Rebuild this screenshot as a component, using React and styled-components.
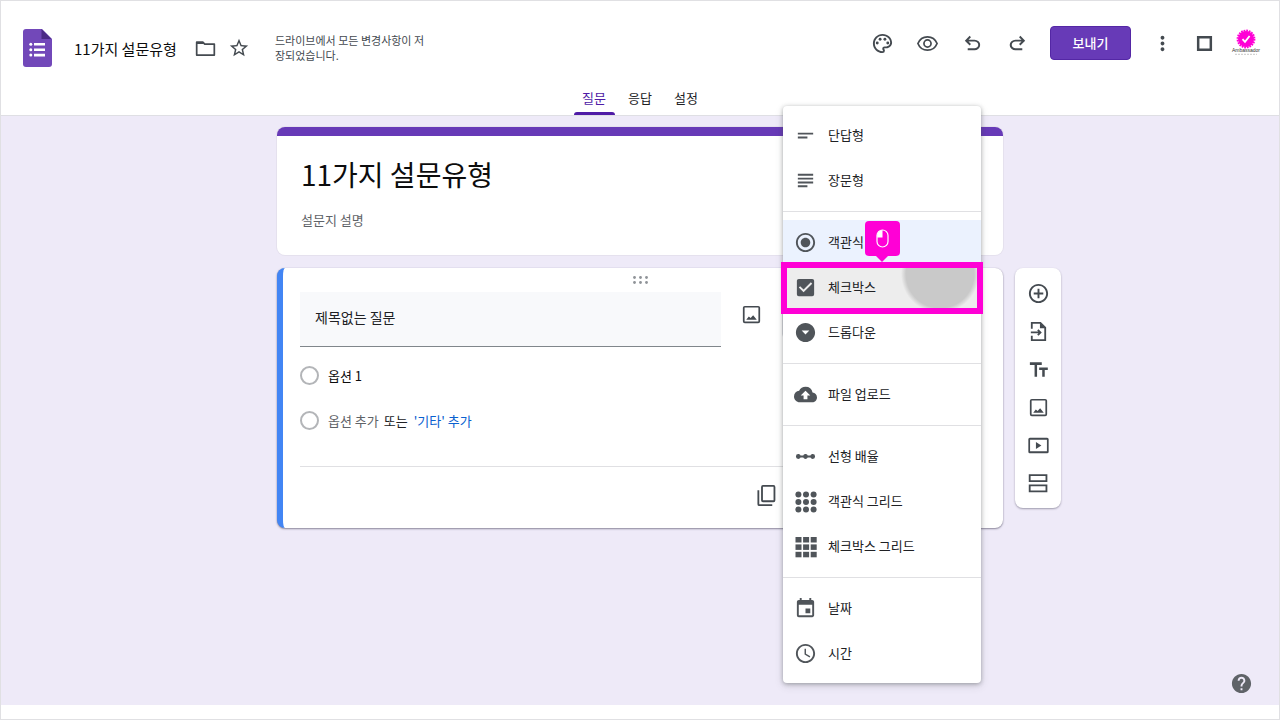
import React from "react";
import styled, { createGlobalStyle, css } from "styled-components";
import {
  MdAccessTime,
  MdAddCircleOutline,
  MdArrowDropDownCircle,
  MdCheckBox,
  MdCloudUpload,
  MdEvent,
  MdHelp,
  MdLinearScale,
  MdMoreVert,
  MdOutlinePalette,
  MdRadioButtonChecked,
  MdShortText,
  MdStarBorder,
  MdSubject,
} from "react-icons/md";

const color = {
  purple: "#673ab7",
  purpleDark: "#4f1ba6",
  canvas: "#eeeaf8",
  ink: "#202124",
  black: "#0c0c0d",
  icon: "#444a50",
  muted: "#5f6368",
  line: "#e0e0e3",
  blue: "#4285f4",
  link: "#0b61d0",
  pink: "#ff00d6",
};

const GlobalStyle = createGlobalStyle`
  *, *::before, *::after { box-sizing: border-box; }
  body {
    margin: 0;
    background: #fff;
    color: ${color.ink};
    font-family: "Noto Sans CJK KR", "Noto Sans", sans-serif;
    font-size: 13px;
    line-height: 20px;
  }
  button, input { font: inherit; color: inherit; }
  svg { display: block; flex: none; }
`;

/* ---------- shared controls ---------- */

const PlainButton = styled.button`
  border: 0;
  padding: 0;
  background: none;
  cursor: pointer;
`;

const IconButton = styled(PlainButton)`
  display: flex;
  align-items: center;
  justify-content: center;
  width: ${(p) => p.$w || 45}px;
  height: ${(p) => p.$h || 34}px;
  color: ${(p) => p.$color || color.icon};
`;

const PlainInput = styled.input`
  display: block;
  border: 0;
  padding: 0;
  background: none;
  outline: none;
  min-width: 0;
`;

/* ---------- frame and header ---------- */

const Frame = styled.div`
  display: flex;
  flex-direction: column;
  min-height: 100vh;
  border: 1px solid ${color.line};
  padding-bottom: 14px;
`;

const Header = styled.header`
  border-bottom: 1px solid #dfdfe4;
`;

const TopRow = styled.div`
  display: flex;
  justify-content: space-between;
  align-items: flex-start;
  height: 84px;
  padding: 25px 12px 0 22px;
`;

const DocInfo = styled.div`
  display: flex;
  align-items: center;
  height: 44px;
`;

const DocTitle = styled(PlainInput)`
  width: 110px;
  height: 24px;
  margin: 0 4px 0 22px;
  color: ${color.black};
  font-size: 15px;
`;

const SaveStatus = styled.p`
  width: 154px;
  margin: 0 0 0 19px;
  color: ${color.icon};
  font-size: 11px;
  line-height: 15px;
  word-break: break-all;
`;

const Actions = styled.div`
  display: flex;
  align-items: center;
`;

const SendButton = styled(PlainButton)`
  width: 81px;
  height: 34px;
  margin: 0 10px;
  border-radius: 4px;
  background: ${color.purple};
  border: 1px solid #5427a5;
  color: #fff;
  font-weight: 500;
`;

const Tabs = styled.nav`
  display: flex;
  justify-content: center;
  gap: 5px;
`;

const Tab = styled(PlainButton)`
  position: relative;
  width: 41px;
  height: 30px;
  padding-bottom: 5px;
  color: ${(p) => (p.$active ? color.purpleDark : color.ink)};

  ${(p) =>
    p.$active &&
    css`
      &::after {
        content: "";
        position: absolute;
        inset: auto 0 0;
        height: 3px;
        border-radius: 3px 3px 0 0;
        background: ${color.purpleDark};
      }
    `}
`;

/* ---------- form canvas ---------- */

const Canvas = styled.main`
  position: relative;
  flex: 1;
  display: grid;
  grid-template-columns: 1fr minmax(0, 726px) 1fr;
  grid-auto-rows: max-content;
  gap: 13px 0;
  padding: 11px 0 24px;
  background: ${color.canvas};
`;

const Card = styled.section`
  grid-column: 2;
  border-radius: 8px;
  background: #fff;
`;

const TitleCard = styled(Card)`
  border-top: 9px solid ${color.purple};
  padding: 18px 24px 24px;
  box-shadow: 0 0 0 1px #e5e1ee;
`;

const FormTitle = styled(PlainInput)`
  width: 100%;
  height: 40px;
  color: ${color.black};
  font-size: 28px;
  line-height: 40px;
`;

const FormDescription = styled(PlainInput)`
  width: 100%;
  height: 24px;
  margin-top: 13px;
  color: ${color.muted};
`;

const QuestionCard = styled(Card)`
  position: relative;
  border-left: 6px solid ${color.blue};
  padding: 0 22px 0 17px;
  box-shadow: 0 1px 2px rgba(60, 55, 80, 0.55), 0 0 1px rgba(60, 55, 80, 0.25);
`;

const DragHandle = styled(PlainButton)`
  display: flex;
  justify-content: center;
  width: 100%;
  height: 24px;
  padding-top: 8px;
  color: #8f9398;
`;

const QuestionRow = styled.div`
  display: flex;
  align-items: flex-start;
`;

const QuestionInput = styled(PlainInput)`
  flex: 1;
  height: 55px;
  padding: 0 15px 4px;
  border-bottom: 1px solid #80868b;
  background: #f8f9fb;
  font-size: 14px;
`;

const TypeField = styled(PlainButton)`
  width: 199px;
  height: 46px;
  border: 1px solid #dadce0;
  border-radius: 4px;
`;

const Options = styled.div`
  padding: 6px 0 23px;
`;

const OptionRow = styled.div`
  display: flex;
  align-items: center;
  height: 45px;
`;

const Radio = styled.input`
  appearance: none;
  flex: none;
  width: 19px;
  height: 19px;
  margin: 0 9px 0 0;
  border: 2px solid #b3b5b8;
  border-radius: 50%;
`;

const OptionInput = styled(PlainInput)`
  width: 200px;
  height: 20px;
  color: ${color.black};
`;

const AddOption = styled(PlainButton)`
  color: ${color.muted};
`;

const Or = styled.span`
  margin: 0 6px 0 5px;
`;

const AddOther = styled(PlainButton)`
  color: ${color.link};
`;

const QuestionFooter = styled.div`
  display: flex;
  justify-content: flex-end;
  align-items: center;
  height: 62px;
  padding: 0 192px 4px 0;
  border-top: 1px solid ${color.line};
`;

/* ---------- side toolbar ---------- */

const SideTools = styled.aside`
  grid-column: 3;
  justify-self: start;
  align-self: start;
  width: 46px;
  margin-left: 12px;
  padding: 6px 0;
  border-radius: 8px;
  background: #fff;
  box-shadow: 0 1px 2px rgba(60, 55, 80, 0.45);
`;

const HelpButton = styled(IconButton)`
  position: absolute;
  right: 21px;
  bottom: 5px;
`;

/* ---------- question type menu ---------- */

const Menu = styled.div`
  position: absolute;
  z-index: 2;
  top: -162px;
  right: 22px;
  width: 198px;
  padding: 7px 0;
  border-radius: 4px;
  background: #fff;
  box-shadow: 0 1px 4px rgba(60, 64, 67, 0.4), 0 3px 8px rgba(60, 64, 67, 0.15);
`;

const MenuDivider = styled.hr`
  margin: 8px 0;
  border: 0;
  border-top: 1px solid ${color.line};
`;

const MenuItem = styled(PlainButton)`
  position: relative;
  display: flex;
  align-items: center;
  width: 100%;
  height: 45px;
  background: ${(p) => (p.$state === "selected" ? "#ebf2fe" : "#fff")};
  text-align: left;
  ${(p) =>
    p.$state === "pressed" &&
    css`
      z-index: 1;
      background: radial-gradient(circle at 157px 9px, #c9c9c9 34px, #ededed 39px);
    `}
`;

const MenuIcon = styled.span`
  display: flex;
  justify-content: center;
  width: 45px;
  color: #50555a;
`;

const MenuLabel = styled.span`
  padding-bottom: 2px;
`;

const Spotlight = styled.span`
  position: absolute;
  inset: -3px -2px -4px;
  border: 6px solid ${color.pink};
`;

const ClickBadge = styled.span`
  position: absolute;
  left: 82px;
  top: -44px;
  display: flex;
  align-items: center;
  justify-content: center;
  width: 35px;
  height: 35px;
  border-radius: 4px;
  background: ${color.pink};

  &::after {
    content: "";
    position: absolute;
    top: 100%;
    left: 11px;
    border: 6px solid transparent;
    border-top-color: ${color.pink};
    border-bottom: 0;
  }
`;

/* ---------- drawings ---------- */

const Svg = ({ size = 23, children, ...rest }) => (
  <svg width={size} height={size} viewBox="0 0 24 24" fill="currentColor" aria-hidden="true" {...rest}>
    {children}
  </svg>
);

const SymbolSvg = ({ d, size = 23 }) => (
  <svg width={size} height={size} viewBox="0 -960 960 960" fill="currentColor" aria-hidden="true">
    <path d={d} />
  </svg>
);

const FormsLogo = () => (
  <svg width="29" height="38" viewBox="0 0 29 38" aria-hidden="true">
    <path d="M3 0h16l10 10v25a3 3 0 0 1-3 3H3a3 3 0 0 1-3-3V3a3 3 0 0 1 3-3z" fill="#7248b9" />
    <path d="M18.500 0L28.500 10H18.500z" fill="#4b2a86" />
    <g fill="#fff">
      <path d="M11 14h11v2.600H11zM11 19.400h11V22H11zM11 24.800h11v2.600H11z" />
      <circle cx="7.800" cy="15.300" r="1.500" />
      <circle cx="7.800" cy="20.700" r="1.500" />
      <circle cx="7.800" cy="26.100" r="1.500" />
    </g>
  </svg>
);

const FolderIcon = () => (
  <Svg fill="none" stroke="currentColor" strokeWidth="1.8" strokeLinejoin="round">
    <path d="M3 5.400h6.200l2 2H21.200v11.400H2.800V5.400z" />
    <path d="M3 6.400h7" />
  </Svg>
);

const EyeIcon = () => (
  <Svg fill="none" stroke="currentColor" strokeWidth="1.8">
    <path d="M12 5C7.600 5 3.700 7.800 2 12c1.700 4.200 5.600 7 10 7s8.300-2.800 10-7c-1.700-4.200-5.600-7-10-7z" />
    <circle cx="12" cy="12" r="3.700" />
  </Svg>
);

const UndoIcon = () => (
  <SymbolSvg d="M280-200v-80h284q63 0 109.500-40T720-420q0-60-46.500-100T564-560H312l104 104-56 56-200-200 200-200 56 56-104 104h252q97 0 169.500 63T800-420q0 94-72.500 157T564-200H280Z" />
);

const RedoIcon = () => (
  <SymbolSvg d="M396-200q-97 0-169.500-63T154-420q0-94 72.500-157T396-640h252L544-744l56-56 200 200-200 200-56-56 104-104H396q-63 0-109.500 40T240-420q0 60 46.500 100T396-280h284v80H396Z" />
);

const SquareIcon = () => (
  <Svg fill="none" stroke="currentColor" strokeWidth="2.600">
    <path d="M5.400 5.400h13.200v13.200H5.400z" />
  </Svg>
);

const AmbassadorAvatar = () => (
  <svg width="30" height="30" viewBox="0 0 30 30" aria-hidden="true">
    <circle cx="15" cy="11" r="8" fill={color.pink} />
    <circle cx="15" cy="11" r="8.400" fill="none" stroke={color.pink} strokeWidth="2" strokeDasharray="1.700 0.940" />
    <path d="M11.500 11.200l2.500 2.600 4.600-5.800" fill="none" stroke="#fff" strokeWidth="1.800" />
    <text x="15" y="24" textAnchor="middle" fontSize="5" fontFamily="Liberation Sans, sans-serif" fill="#333">
      Ambassador
    </text>
    <path d="M4 26.300h22" stroke="#c9c9c9" strokeWidth="1" strokeDasharray="2 1" />
  </svg>
);

const DragDots = () => (
  <svg width="15" height="8" viewBox="0 0 15 8" fill="currentColor" aria-hidden="true">
    {[1.5, 7.5, 13.5].map((x) =>
      [1.5, 6.5].map((y) => <circle key={`${x}-${y}`} cx={x} cy={y} r="1.400" />)
    )}
  </svg>
);

const ImageIcon = () => (
  <Svg>
    <path
      fillRule="evenodd"
      d="M5 3h14a2 2 0 0 1 2 2v14a2 2 0 0 1-2 2H5a2 2 0 0 1-2-2V5a2 2 0 0 1 2-2zm0 1.800a.2.200 0 0 0-.2.200v14c0 .1.100.2.200.2h14a.2.200 0 0 0 .2-.2V5a.2.200 0 0 0-.2-.2z"
    />
    <path d="M6.500 17.500l2.700-3.400 1.900 1.500 2.600-2.800 3.800 4.700z" />
  </Svg>
);

const ImportIcon = () => (
  <Svg fill="none" stroke="currentColor" strokeWidth="1.900">
    <path d="M5 9V3h9l5 5v13H5v-4.500M4 13h10M11.300 10.200l2.800 2.800-2.800 2.800" />
    <path d="M13.500 3v5.500H19z" fill="currentColor" stroke="none" />
  </Svg>
);

const TextIcon = () => (
  <Svg>
    <path d="M3 4.500v2.700h4.900v12.300h2.600V7.200h4.900V4.500zM21.700 10h-9v2.500h3.200v7h2.600v-7h3.200z" />
  </Svg>
);

const VideoIcon = () => (
  <Svg>
    <path
      fillRule="evenodd"
      d="M3 4h18a1.600 1.600 0 0 1 1.600 1.600v12.800A1.600 1.600 0 0 1 21 20H3a1.600 1.600 0 0 1-1.600-1.600V5.600A1.600 1.600 0 0 1 3 4zm.2 1.900v12.200h17.600V5.900z"
    />
    <path d="M9.300 8.300v7.400l5.700-3.700z" />
  </Svg>
);

const SectionIcon = () => (
  <Svg fill="none" stroke="currentColor" strokeWidth="1.900">
    <path d="M2.800 3.200h17.500v6.300H2.800zM2.800 14h17.500v6.300H2.800z" />
  </Svg>
);

const CopyIcon = () => (
  <Svg fill="none" stroke="currentColor" strokeWidth="1.900">
    <rect x="7.300" y="2" width="13" height="16" rx="1" />
    <path d="M3.500 6.500V21a1 1 0 0 0 1 1h13.500" />
  </Svg>
);

const cells = [0, 1, 2].flatMap((row) => [0, 1, 2].map((col) => [col, row]));

const DotGridIcon = () => (
  <svg width="22" height="22" viewBox="0 0 22 22" fill="currentColor" aria-hidden="true">
    {cells.map(([c, r]) => (
      <circle key={`${c}${r}`} cx={3.4 + c * 7.6} cy={3.4 + r * 7.6} r="3" />
    ))}
  </svg>
);

const SquareGridIcon = () => (
  <svg width="22" height="22" viewBox="0 0 22 22" fill="currentColor" aria-hidden="true">
    {cells.map(([c, r]) => (
      <rect key={`${c}${r}`} x={0.5 + c * 7.6} y={1 + r * 7.4} width="6" height="5.500" />
    ))}
  </svg>
);

const MouseIcon = () => (
  <svg width="13" height="19" viewBox="0 0 13 19" aria-hidden="true">
    <path d="M6.500 1A5.300 5.300 0 0 0 1.200 6.300V8.500h5.300z" fill="#fff" />
    <rect x="1" y="1" width="11" height="17" rx="5.500" fill="none" stroke="#fff" strokeWidth="1.200" />
  </svg>
);

/* ---------- data ---------- */

const questionTypes = [
  [
    { label: "단답형", icon: <MdShortText size={23} /> },
    { label: "장문형", icon: <MdSubject size={23} /> },
  ],
  [
    { label: "객관식", icon: <MdRadioButtonChecked size={23} />, state: "selected" },
    { label: "체크박스", icon: <MdCheckBox size={23} />, state: "pressed" },
    { label: "드롭다운", icon: <MdArrowDropDownCircle size={23} /> },
  ],
  [{ label: "파일 업로드", icon: <MdCloudUpload size={23} /> }],
  [
    { label: "선형 배율", icon: <MdLinearScale size={23} /> },
    { label: "객관식 그리드", icon: <DotGridIcon /> },
    { label: "체크박스 그리드", icon: <SquareGridIcon /> },
  ],
  [
    { label: "날짜", icon: <MdEvent size={23} /> },
    { label: "시간", icon: <MdAccessTime size={23} /> },
  ],
];

const sideTools = [
  { label: "질문 추가", icon: <MdAddCircleOutline size={23} /> },
  { label: "질문 가져오기", icon: <ImportIcon /> },
  { label: "제목 및 설명 추가", icon: <TextIcon /> },
  { label: "이미지 추가", icon: <ImageIcon /> },
  { label: "동영상 추가", icon: <VideoIcon /> },
  { label: "섹션 추가", icon: <SectionIcon /> },
];

const headerTools = [
  { label: "테마 맞춤설정", icon: <MdOutlinePalette size={23} /> },
  { label: "미리보기", icon: <EyeIcon /> },
  { label: "실행취소", icon: <UndoIcon /> },
  { label: "재실행", icon: <RedoIcon /> },
];

function TypeMenu() {
  return (
    <Menu role="menu" aria-label="질문 유형">
      {questionTypes.map((group, i) => (
        <React.Fragment key={group[0].label}>
          {i > 0 && <MenuDivider />}
          {group.map(({ label, icon, state }) => (
            <MenuItem key={label} role="menuitem" $state={state}>
              <MenuIcon>{icon}</MenuIcon>
              <MenuLabel>{label}</MenuLabel>
              {state === "pressed" && (
                <>
                  <Spotlight />
                  <ClickBadge>
                    <MouseIcon />
                  </ClickBadge>
                </>
              )}
            </MenuItem>
          ))}
        </React.Fragment>
      ))}
    </Menu>
  );
}

export default function App() {
  return (
    <>
      <GlobalStyle />
      <Frame>
        <Header>
          <TopRow>
            <DocInfo>
              <FormsLogo />
              <DocTitle aria-label="문서 제목" defaultValue="11가지 설문유형" />
              <IconButton $w={34} aria-label="폴더로 이동">
                <FolderIcon />
              </IconButton>
              <IconButton $w={34} aria-label="별표">
                <MdStarBorder size={22} />
              </IconButton>
              <SaveStatus>드라이브에서 모든 변경사항이 저장되었습니다.</SaveStatus>
            </DocInfo>
            <Actions>
              {headerTools.map(({ label, icon }) => (
                <IconButton key={label} aria-label={label}>
                  {icon}
                </IconButton>
              ))}
              <SendButton>보내기</SendButton>
              <IconButton $w={42} aria-label="더보기">
                <MdMoreVert size={23} />
              </IconButton>
              <IconButton $w={42} aria-label="전체 화면">
                <SquareIcon />
              </IconButton>
              <IconButton $w={42} aria-label="계정">
                <AmbassadorAvatar />
              </IconButton>
            </Actions>
          </TopRow>
          <Tabs>
            <Tab $active>질문</Tab>
            <Tab>응답</Tab>
            <Tab>설정</Tab>
          </Tabs>
        </Header>

        <Canvas>
          <TitleCard>
            <FormTitle aria-label="설문지 제목" defaultValue="11가지 설문유형" />
            <FormDescription aria-label="설문지 설명" defaultValue="설문지 설명" />
          </TitleCard>

          <QuestionCard>
            <DragHandle aria-label="질문 이동">
              <DragDots />
            </DragHandle>
            <QuestionRow>
              <QuestionInput aria-label="질문" defaultValue="제목없는 질문" />
              <IconButton $w={61} $h={45} aria-label="이미지 추가">
                <ImageIcon />
              </IconButton>
              <TypeField aria-label="질문 유형 선택" />
            </QuestionRow>
            <Options>
              <OptionRow>
                <Radio type="radio" name="option" aria-label="옵션 1" />
                <OptionInput aria-label="옵션 1 내용" defaultValue="옵션 1" />
              </OptionRow>
              <OptionRow>
                <Radio type="radio" name="option" aria-label="새 옵션" />
                <AddOption>옵션 추가</AddOption>
                <Or>또는</Or>
                <AddOther>'기타' 추가</AddOther>
              </OptionRow>
            </Options>
            <QuestionFooter>
              <IconButton aria-label="복사">
                <CopyIcon />
              </IconButton>
            </QuestionFooter>
            <TypeMenu />
          </QuestionCard>

          <SideTools>
            {sideTools.map(({ label, icon }) => (
              <IconButton key={label} $w={46} $h={38} aria-label={label}>
                {icon}
              </IconButton>
            ))}
          </SideTools>

          <HelpButton $w={34} $color={color.muted} aria-label="도움말">
            <MdHelp size={23} />
          </HelpButton>
        </Canvas>
      </Frame>
    </>
  );
}
